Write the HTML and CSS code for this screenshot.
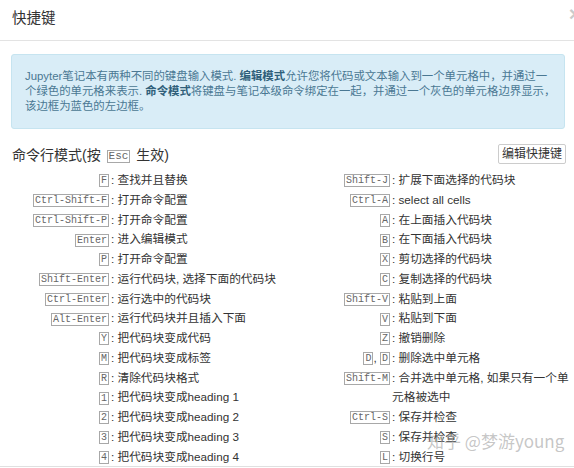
FILE: index.html
```html
<!DOCTYPE html>
<html lang="zh-CN">
<head>
    <meta charset="UTF-8">
    <meta name="viewport" content="width=device-width, initial-scale=1.0">
    <title>快捷键</title>
    <link rel="stylesheet" href="styles.css">
</head>
<body>
    <div class="modal" role="dialog" aria-label="快捷键">
        <div class="modal-header">
            <h4 class="modal-title">快捷键</h4>
            <span class="close" aria-hidden="true">×</span>
        </div>

        <div class="modal-body">
            <div class="alert">
                Jupyter笔记本有两种不同的键盘输入模式. <b>编辑模式</b>允许您将代码或文本输入到一个单元格中，并通过一<br>
                个绿色的单元格来表示. <b>命令模式</b>将键盘与笔记本级命令绑定在一起，并通过一个灰色的单元格边界显示，<br>
                该边框为蓝色的左边框。
            </div>

            <div class="mode-head">
                <h4>命令行模式(按 <kbd class="kbd-lg">Esc</kbd> 生效)</h4>
                <button class="btn">编辑快捷键</button>
            </div>

            <div class="help-cols">
                <!-- Left column -->
                <div class="help-col">
                    <div class="quickhelp"><span class="key"><kbd>F</kbd></span><span class="descr">: 查找并且替换</span></div>
                    <div class="quickhelp"><span class="key"><kbd>Ctrl-Shift-F</kbd></span><span class="descr">: 打开命令配置</span></div>
                    <div class="quickhelp"><span class="key"><kbd>Ctrl-Shift-P</kbd></span><span class="descr">: 打开命令配置</span></div>
                    <div class="quickhelp"><span class="key"><kbd>Enter</kbd></span><span class="descr">: 进入编辑模式</span></div>
                    <div class="quickhelp"><span class="key"><kbd>P</kbd></span><span class="descr">: 打开命令配置</span></div>
                    <div class="quickhelp"><span class="key"><kbd>Shift-Enter</kbd></span><span class="descr">: 运行代码块, 选择下面的代码块</span></div>
                    <div class="quickhelp"><span class="key"><kbd>Ctrl-Enter</kbd></span><span class="descr">: 运行选中的代码块</span></div>
                    <div class="quickhelp"><span class="key"><kbd>Alt-Enter</kbd></span><span class="descr">: 运行代码块并且插入下面</span></div>
                    <div class="quickhelp"><span class="key"><kbd>Y</kbd></span><span class="descr">: 把代码块变成代码</span></div>
                    <div class="quickhelp"><span class="key"><kbd>M</kbd></span><span class="descr">: 把代码块变成标签</span></div>
                    <div class="quickhelp"><span class="key"><kbd>R</kbd></span><span class="descr">: 清除代码块格式</span></div>
                    <div class="quickhelp"><span class="key"><kbd>1</kbd></span><span class="descr">: 把代码块变成heading 1</span></div>
                    <div class="quickhelp"><span class="key"><kbd>2</kbd></span><span class="descr">: 把代码块变成heading 2</span></div>
                    <div class="quickhelp"><span class="key"><kbd>3</kbd></span><span class="descr">: 把代码块变成heading 3</span></div>
                    <div class="quickhelp"><span class="key"><kbd>4</kbd></span><span class="descr">: 把代码块变成heading 4</span></div>
                </div>

                <!-- Right column -->
                <div class="help-col">
                    <div class="quickhelp"><span class="key"><kbd>Shift-J</kbd></span><span class="descr">: 扩展下面选择的代码块</span></div>
                    <div class="quickhelp"><span class="key"><kbd>Ctrl-A</kbd></span><span class="descr">: select all cells</span></div>
                    <div class="quickhelp"><span class="key"><kbd>A</kbd></span><span class="descr">: 在上面插入代码块</span></div>
                    <div class="quickhelp"><span class="key"><kbd>B</kbd></span><span class="descr">: 在下面插入代码块</span></div>
                    <div class="quickhelp"><span class="key"><kbd>X</kbd></span><span class="descr">: 剪切选择的代码块</span></div>
                    <div class="quickhelp"><span class="key"><kbd>C</kbd></span><span class="descr">: 复制选择的代码块</span></div>
                    <div class="quickhelp"><span class="key"><kbd>Shift-V</kbd></span><span class="descr">: 粘贴到上面</span></div>
                    <div class="quickhelp"><span class="key"><kbd>V</kbd></span><span class="descr">: 粘贴到下面</span></div>
                    <div class="quickhelp"><span class="key"><kbd>Z</kbd></span><span class="descr">: 撤销删除</span></div>
                    <div class="quickhelp"><span class="key"><kbd>D</kbd>, <kbd>D</kbd></span><span class="descr">: 删除选中单元格</span></div>
                    <div class="quickhelp"><span class="key"><kbd>Shift-M</kbd></span><span class="descr">: 合并选中单元格, 如果只有一个单元格被选中</span></div>
                    <div class="quickhelp"><span class="key"><kbd>Ctrl-S</kbd></span><span class="descr">: 保存并检查</span></div>
                    <div class="quickhelp"><span class="key"><kbd>S</kbd></span><span class="descr">: 保存并检查</span></div>
                    <div class="quickhelp"><span class="key"><kbd>L</kbd></span><span class="descr">: 切换行号</span></div>
                </div>
            </div>
        </div>

        <div class="modal-footer"></div>
    </div>

    <div class="watermark">知乎 @梦游young</div>
</body>
</html>
```

FILE: styles.css
```css
/* Global Styles */
body {
    margin: 0;
    font-family: "Liberation Sans", "Noto Sans CJK SC", sans-serif;
    font-size: 12px;
    color: #333;
    background: #fff;
    overflow: hidden;
}

.modal {
    width: 100%;
}

/* Header */
.modal-header {
    display: flex;
    justify-content: space-between;
    align-items: center;
    height: 41px;
    padding: 0 0 4px 12px;
    box-sizing: border-box;
    border-bottom: 1px solid #e3e3e3;
}

.modal-title {
    margin: 0;
    font-size: 14.5px;
    font-weight: normal;
    line-height: 20px;
}

.close {
    align-self: flex-start;
    margin: 3px -7px 0 0;
    font-size: 21px;
    font-weight: bold;
    line-height: 1;
    color: #000;
    opacity: 0.2;
}

/* Body */
.modal-body {
    padding: 13px 0 0 11px;
}

.alert {
    margin: 0 9px 14px 0;
    padding: 14px 10px 14px 13px;
    background: #d9edf7;
    border: 1px solid #c6e4f0;
    border-radius: 3px;
    color: #4a7893;
    font-size: 11.4px;
    line-height: 15px;
    white-space: nowrap;
}

.alert b {
    color: #2f5f7a;
}

.mode-head {
    display: flex;
    justify-content: space-between;
    align-items: center;
    height: 22px;
    margin-right: 8px;
}

.mode-head h4 {
    margin: 0 0 0 1px;
    font-size: 14px;
    font-weight: normal;
}

.btn {
    height: 20px;
    padding: 0 3px;
    font-family: inherit;
    font-size: 12px;
    line-height: 18px;
    color: #333;
    background: #fff;
    border: 1px solid #ccc;
    border-radius: 2px;
}

/* Shortcut list */
.help-cols {
    display: grid;
    grid-template-columns: 281px 1fr;
    margin-top: 5px;
    font-size: 11.7px;
}

.quickhelp {
    display: flex;
    line-height: 19.75px;
}

.key {
    flex: none;
    width: 98px;
    text-align: right;
}

.descr {
    padding-left: 2px;
    min-width: 0;
}

kbd {
    display: inline-block;
    padding: 0 1px;
    font-family: "Liberation Mono", monospace;
    font-size: 10px;
    line-height: 11px;
    color: #666;
    background: #fff;
    border: 1px solid #a8a8a8;
    vertical-align: middle;
}

.kbd-lg {
    font-size: 11px;
    line-height: 11px;
    margin: 0 2px;
}

/* Footer */
.modal-footer {
    border-top: 1px solid #e0e0e0;
    height: 20px;
}

/* Site watermark laid over the dialog */
.watermark {
    position: absolute;
    left: 427px;
    top: 428px;
    font-family: "Noto Sans CJK SC", sans-serif;
    font-size: 17px;
    color: rgba(150, 150, 150, 0.55);
    white-space: nowrap;
    pointer-events: none;
}
```
